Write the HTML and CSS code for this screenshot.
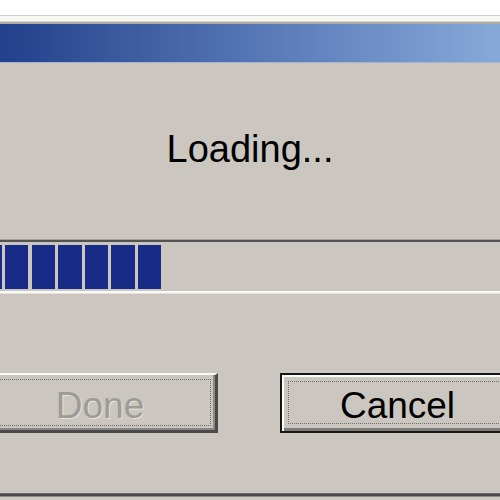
FILE: index.html
```html
<!DOCTYPE html>
<html>
<head>
<meta charset="utf-8">
<link rel="stylesheet" href="styles.css">
</head>
<body>
<div class="dialog">
  <div class="frame-top"></div>
  <div class="titlebar"></div>
  <div class="content">
    <div class="message">Loading...</div>
    <div class="progress">
      <div class="track">
        <div class="block first"></div>
        <div class="block"></div>
        <div class="block"></div>
        <div class="block"></div>
        <div class="block"></div>
        <div class="block"></div>
        <div class="block"></div>
      </div>
    </div>
    <div class="buttons">
      <div class="btn btn-done">Done</div>
      <div class="btn btn-cancel">Cancel</div>
    </div>
  </div>
  <div class="frame-bottom"></div>
</div>
</body>
</html>
```
FILE: styles.css
```css
html, body {
  margin: 0;
  padding: 0;
  width: 500px;
  height: 500px;
  overflow: hidden;
  background: #ffffff;
}

.dialog {
  margin-top: 15px;
  background: #cbc7c0;
}

.frame-top {
  height: 9px;
  background: linear-gradient(#d2cfc8 0 1px, #f7f6f3 1px 6px, #dcd9d3 6px 7px, #aeaba5 7px 9px);
}

.titlebar {
  height: 38px;
  background: linear-gradient(90deg, #22408b 0%, #5576b4 50%, #87a9d9 100%);
  border-bottom: 1px solid #a7b4d0;
}

.content {
  padding: 66px 0 60px;
}

.message {
  font: 38px/40px "Liberation Sans", Arial, sans-serif;
  color: #000;
  text-align: center;
  margin-bottom: 70px;
}

.progress {
  border-top: 1px solid #a19f99;
}

.track {
  display: flex;
  gap: 3.2px;
  padding: 3px 0 2px;
  border-top: 2px solid #525252;
  border-bottom: 2px solid #fbfaf7;
  box-shadow: 0 1px 0 #e4e2dc;
}

.block {
  width: 23.4px;
  height: 44px;
  background: #172b87;
  flex: none;
}

.block.first {
  width: 1.8px;
}

.buttons {
  display: flex;
  gap: 62px;
  margin-top: 80px;
  margin-left: -17px;
}

.btn {
  position: relative;
  box-sizing: border-box;
  flex: none;
  width: 235px;
  height: 60px;
  padding-top: 6px;
  display: flex;
  align-items: center;
  justify-content: center;
  font: 37px/42px "Liberation Sans", Arial, sans-serif;
  background: #cbc7c0;
}

.btn::after {
  content: "";
  position: absolute;
  border: 1px dotted #6e6d69;
}

.btn-done {
  color: #9d9b96;
  text-shadow: 1px 1px 0 #e4e2dd;
  border-top: 2px solid #fbfbf9;
  border-left: 2px solid #fbfbf9;
  border-right: 3px solid #4a4a4a;
  border-bottom: 3px solid #4a4a4a;
  box-shadow: inset -2px -2px 0 #8a8883;
}

.btn-done::after {
  top: 4px;
  left: 4px;
  right: 4px;
  bottom: 4px;
}

.btn-cancel {
  color: #000;
  border: 2px solid #151515;
  box-shadow: inset 2px 2px 0 #fbfbf9, inset -3px -3px 0 #7d7b76;
}

.btn-cancel::after {
  top: 6px;
  left: 6px;
  right: 6px;
  bottom: 7px;
}

.frame-bottom {
  height: 7px;
  background: linear-gradient(#6a6a6a 0 1px, #484848 1px 3px, #8c8a85 3px 4px, #cfccc6 4px 7px);
}
```
